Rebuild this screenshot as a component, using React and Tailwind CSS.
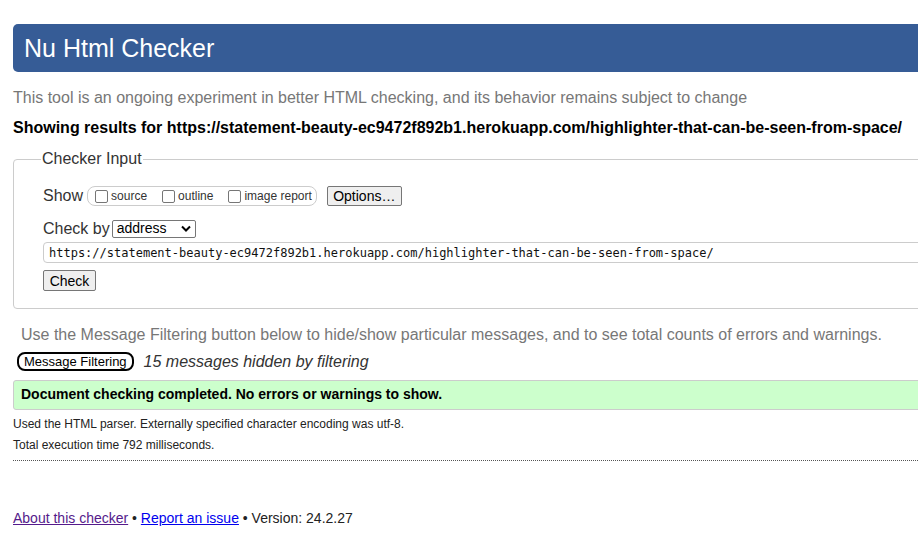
import React from 'react';

const sans = { fontFamily: '"Liberation Sans", Arial, sans-serif' };

function Checkbox({ label }) {
    return (
        <label className="flex items-center">
            <span className="inline-block w-[13px] h-[13px] border border-[#767676] rounded-[2px] bg-white mr-[3px]" />
            <span className="text-[12px] text-[#333]">{label}</span>
        </label>
    );
}

function Button({ children, className = '' }) {
    return (
        <button className={`bg-[#efefef] border border-[#767676] rounded-[2px] text-[14px] text-black leading-none ${className}`}>
            {children}
        </button>
    );
}

export default function App() {
    const url = 'https://statement-beauty-ec9472f892b1.herokuapp.com/highlighter-that-can-be-seen-from-space/';

    return (
        <div className="w-full h-[543px] overflow-hidden bg-white" style={sans}>
            <div className="w-[1000px] pl-[13px] pt-[24px]">
                <h1 className="h-[48px] bg-[#365c96] rounded-l-[5px] flex items-center pl-[11px] text-white text-[25px] leading-none">
                    Nu Html Checker
                </h1>

                <p className="mt-[17px] text-[16px] leading-[18px] text-[#777]">
                    This tool is an ongoing experiment in better HTML checking, and its behavior remains subject to change
                </p>
                <p className="mt-[12px] text-[16px] leading-[18px] font-bold text-black">
                    Showing results for {url}
                </p>

                <fieldset className="mt-[10px] border border-[#ccc] rounded-[4px] pl-[29px] pb-[15px]">
                    <legend className="text-[16px] text-[#333] px-[1px] -ml-[2px]">Checker Input</legend>

                    <div className="flex items-center mt-[15px] h-[20px]">
                        <span className="text-[16px] text-[#333] mr-[4px]">Show</span>
                        <div className="flex items-center h-[20px] border border-[#ccc] rounded-[8px] pl-[7px] pr-[4px] gap-[15px]">
                            <Checkbox label="source" />
                            <Checkbox label="outline" />
                            <Checkbox label="image report" />
                        </div>
                        <Button className="ml-[10px] h-[20px] w-[75px]">Options…</Button>
                    </div>

                    <div className="flex items-center mt-[13px] h-[19px]">
                        <span className="text-[16px] text-[#333] mr-[2px]">Check by</span>
                        <div className="w-[84px] h-[18px] border border-[#767676] rounded-[2px] flex items-center justify-between px-[4px]">
                            <span className="text-[14px] text-black">address</span>
                            <svg width="10" height="7" viewBox="0 0 10 7">
                                <path d="M1 1.5 L5 5.5 L9 1.5" stroke="black" strokeWidth="2" fill="none" />
                            </svg>
                        </div>
                    </div>

                    <div className="mt-[4px] h-[21px] border border-[#ccc] rounded-l-[4px] flex items-center pl-[5px]">
                        <span className="text-[12px] text-[#111]" style={{ fontFamily: '"DejaVu Sans Mono", "Liberation Mono", monospace' }}>
                            {url}
                        </span>
                    </div>

                    <Button className="mt-[7px] h-[21px] w-[53px]">Check</Button>
                </fieldset>

                <p className="mt-[17px] pl-[8px] text-[16px] leading-[18px] text-[#777]">
                    Use the Message Filtering button below to hide/show particular messages, and to see total counts of errors and warnings.
                </p>

                <div className="flex items-center mt-[8px] h-[20px] pl-[4px]">
                    <button className="h-[19px] px-[5px] border-2 border-black rounded-[8px] text-[13px] text-black leading-none">
                        Message Filtering
                    </button>
                    <span className="ml-[10px] text-[16px] italic text-[#333]">15 messages hidden by filtering</span>
                </div>

                <div className="mt-[8px] h-[30px] bg-[#ccffcc] border border-[#ccc] rounded-l-[3px] flex items-center pl-[7px]">
                    <span className="text-[14px] font-bold text-black">Document checking completed. No errors or warnings to show.</span>
                </div>

                <p className="mt-[7px] text-[12px] leading-[14px] text-[#222]">
                    Used the HTML parser. Externally specified character encoding was utf-8.
                </p>
                <p className="mt-[7px] text-[12px] leading-[14px] text-[#222]">
                    Total execution time 792 milliseconds.
                </p>
                <div className="mt-[8px] border-t border-dotted border-[#555]" />

                <p className="mt-[49px] text-[14px] leading-[16px] text-[#222]">
                    <a href="#" className="underline text-[#551a8b]">About this checker</a>
                    {' • '}
                    <a href="#" className="underline text-[#0000ee]">Report an issue</a>
                    {' • Version: 24.2.27'}
                </p>
            </div>
        </div>
    );
}
